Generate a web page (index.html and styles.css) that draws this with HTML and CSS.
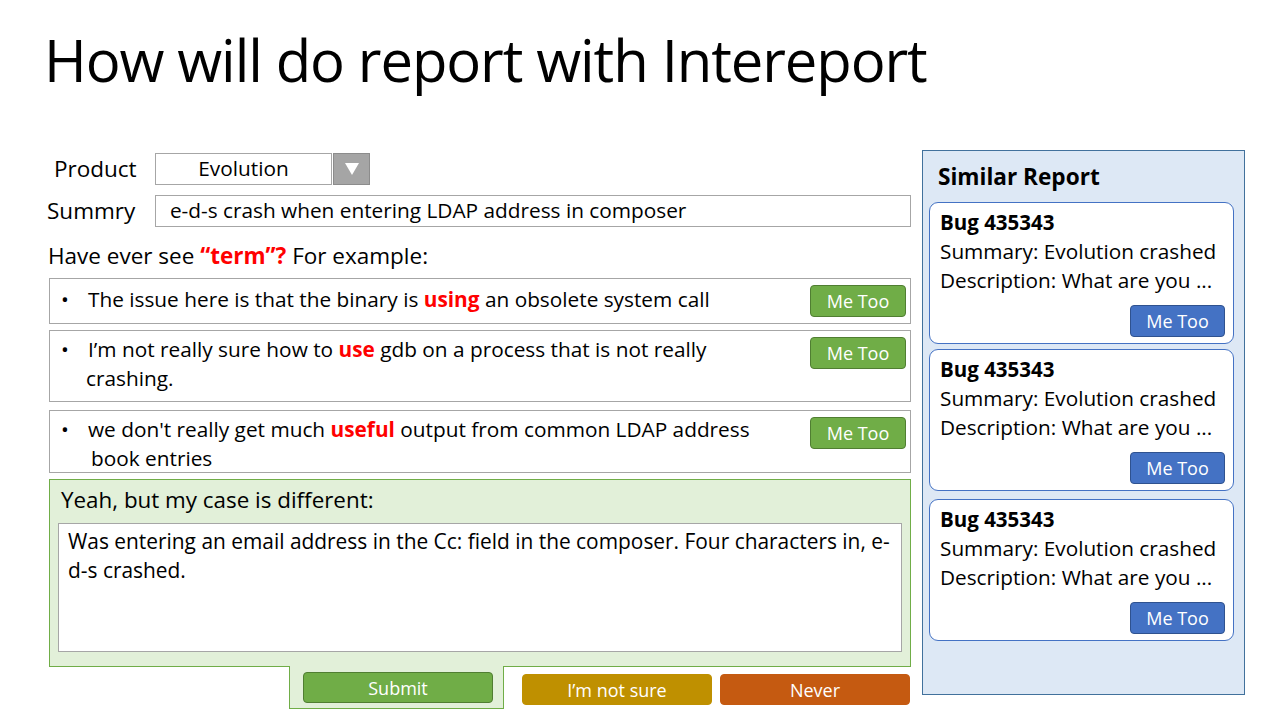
FILE: index.html
```html
<!DOCTYPE html>
<html lang="en">
<head>
<meta charset="utf-8">
<title>How will do report with Intereport</title>
<link rel="stylesheet" href="styles.css">
</head>
<body>
<div class="slide">
  <h1 class="title">How will do report with Intereport</h1>
  <div class="main">
    <div class="form">
      <div class="field-row">
        <span class="label label-product">Product</span>
        <div class="select">
          <span class="select-value">Evolution</span>
          <span class="select-arrow"><svg width="14" height="12" viewBox="0 0 14 12"><polygon points="0,0 14,0 7,12" fill="#fff"/></svg></span>
        </div>
      </div>
      <div class="field-row field-summary">
        <span class="label label-summary">Summry</span>
        <div class="input">e-d-s crash when entering LDAP address in composer</div>
      </div>
      <p class="prompt">Have ever see <b class="hl">“term”?</b> For example:</p>

      <div class="item item-1">
        <span class="bullet">•</span>
        <div class="item-text">The issue here is that the binary is <b class="hl">using</b> an obsolete system call</div>
        <button class="btn btn-green">Me Too</button>
      </div>
      <div class="item item-2">
        <span class="bullet">•</span>
        <div class="item-text">I’m not really sure how to <b class="hl">use</b> gdb on a process that is not really<br><span class="wrap2">crashing.</span></div>
        <button class="btn btn-green">Me Too</button>
      </div>
      <div class="item item-3">
        <span class="bullet">•</span>
        <div class="item-text">we don't really get much <b class="hl">useful</b> output from common LDAP address<br><span class="wrap3">book entries</span></div>
        <button class="btn btn-green">Me Too</button>
      </div>

      <div class="case">
        <div class="case-label">Yeah, but my case is different:</div>
        <div class="textarea">Was entering an email address in the Cc: field in the composer. Four characters in, e-<br>d-s crashed.</div>
      </div>
      <div class="actions">
        <div class="submit-tab">
          <button class="btn btn-submit">Submit</button>
        </div>
        <button class="btn btn-notsure">I’m not sure</button>
        <button class="btn btn-never">Never</button>
      </div>
    </div>

    <aside class="similar">
      <h2 class="similar-title">Similar Report</h2>
      <div class="card">
        <div class="card-bug">Bug 435343</div>
        <div class="card-line">Summary: Evolution crashed</div>
        <div class="card-line">Description: What are you ...</div>
        <div class="card-actions"><button class="btn btn-blue">Me Too</button></div>
      </div>
      <div class="card">
        <div class="card-bug">Bug 435343</div>
        <div class="card-line">Summary: Evolution crashed</div>
        <div class="card-line">Description: What are you ...</div>
        <div class="card-actions"><button class="btn btn-blue">Me Too</button></div>
      </div>
      <div class="card">
        <div class="card-bug">Bug 435343</div>
        <div class="card-line">Summary: Evolution crashed</div>
        <div class="card-line">Description: What are you ...</div>
        <div class="card-actions"><button class="btn btn-blue">Me Too</button></div>
      </div>
    </aside>
  </div>
</div>
</body>
</html>
```

FILE: styles.css
```css
* { box-sizing: border-box; }
html, body { margin: 0; padding: 0; background: #fff; }
body {
  font-family: "Open Sans", "Noto Sans", sans-serif;
  color: #000;
  width: 1280px;
  height: 720px;
  overflow: hidden;
}
.slide { width: 1280px; height: 720px; }

.title {
  margin: 0;
  padding: 30px 0 0 44px;
  height: 90px;
  font-weight: 400;
  font-size: 58px;
  line-height: 60px;
  letter-spacing: -1.1px;
}

.main {
  display: flex;
  align-items: flex-start;
  margin-top: 60px;
  padding-left: 49px;
}

.form {
  width: 862px;
  margin-top: 3px;
}

.field-row {
  display: flex;
  align-items: center;
  height: 32px;
}
.field-summary { margin-top: 10px; }
.label {
  width: 106px;
  font-size: 22.5px;
  line-height: 32px;
}
.label-product { padding-left: 5px; }
.label-summary { margin-left: -2px; width: 108px; }

.select { display: flex; height: 32px; }
.select-value {
  width: 177px;
  height: 32px;
  border: 1px solid #a6a6a6;
  text-align: center;
  font-size: 20.8px;
  line-height: 29px;
}
.select-arrow {
  width: 37px;
  height: 32px;
  margin-left: 1px;
  background: #a5a5a5;
  border: 1px solid #8c8c8c;
  display: flex;
  align-items: center;
  justify-content: center;
}

.input {
  width: 757px;
  height: 32px;
  border: 1px solid #a6a6a6;
  padding-left: 14px;
  font-size: 20.8px;
  line-height: 29px;
}

.prompt {
  margin: 15px 0 8px -1px;
  font-size: 22.5px;
  line-height: 28px;
}
.hl { color: #ff0000; font-weight: 700; }

.item {
  display: flex;
  align-items: flex-start;
  border: 1px solid #a6a6a6;
  padding: 0 4px 0 11px;
  font-size: 20.8px;
  line-height: 29px;
}
.item-1 { height: 46px; }
.item-2 { height: 72px; margin-top: 6px; }
.item-3 { height: 63px; margin-top: 8px; }
.bullet { width: 27px; padding-top: 6px; }
.item-text { flex: 1; padding-top: 6px; }
.item-2 .bullet, .item-2 .item-text,
.item-3 .bullet, .item-3 .item-text { padding-top: 4px; }
.wrap2 { margin-left: -2px; }
.wrap3 { margin-left: 3px; }
.item .btn { margin-top: 6px; }

.btn {
  font-family: inherit;
  color: #fff;
  font-size: 18px;
  line-height: 1;
  border-radius: 4px;
  padding: 0;
  cursor: pointer;
}
.btn-green {
  width: 96px;
  height: 32px;
  background: #70ad47;
  border: 1px solid #507e32;
}

.case {
  margin-top: 6px;
  height: 188px;
  background: #e2f0d9;
  border: 1px solid #70ad47;
  padding: 6px 8px 0 8px;
}
.case-label {
  padding-left: 3px;
  font-size: 22.4px;
  line-height: 28px;
}
.textarea {
  margin-top: 9px;
  height: 129px;
  background: #fff;
  border: 1px solid #a6a6a6;
  padding: 3px 9px;
  font-size: 20.9px;
  line-height: 29px;
}

.actions {
  display: flex;
  align-items: flex-start;
  margin-left: 240px;
}
.submit-tab {
  width: 215px;
  height: 43px;
  margin-top: -1px;
  background: #e2f0d9;
  border: 1px solid #70ad47;
  border-top: none;
  padding: 6px 0 0 13px;
}
.btn-submit {
  width: 190px;
  height: 31px;
  background: #70ad47;
  border: 1px solid #507e32;
}
.btn-notsure {
  width: 190px;
  height: 31px;
  margin: 7px 0 0 18px;
  background: #bf9000;
  border: 1px solid #bf9000;
}
.btn-never {
  width: 190px;
  height: 31px;
  margin: 7px 0 0 8px;
  background: #c55a11;
  border: 1px solid #c55a11;
}

.similar {
  width: 323px;
  height: 545px;
  margin-left: 11px;
  background: #dde8f5;
  border: 1px solid #41719c;
  padding: 11px 0 0 6px;
}
.similar-title {
  margin: 0 0 10px 0;
  padding-left: 9px;
  font-size: 22.6px;
  line-height: 30px;
  font-weight: 700;
}
.card {
  width: 305px;
  height: 142px;
  background: #fff;
  border: 1px solid #4472c4;
  border-radius: 9px;
  padding: 5px 8px 0 10px;
  font-size: 20.75px;
  line-height: 29px;
}
.card:nth-of-type(2) { margin-top: 5px; }
.card:nth-of-type(3) { margin-top: 8px; }
.card-bug { font-weight: 700; font-size: 20.5px; }
.card-actions {
  display: flex;
  justify-content: flex-end;
  margin-top: 10px;
}
.btn-blue {
  width: 95px;
  height: 32px;
  background: #4472c4;
  border: 1px solid #2f528f;
}
```
